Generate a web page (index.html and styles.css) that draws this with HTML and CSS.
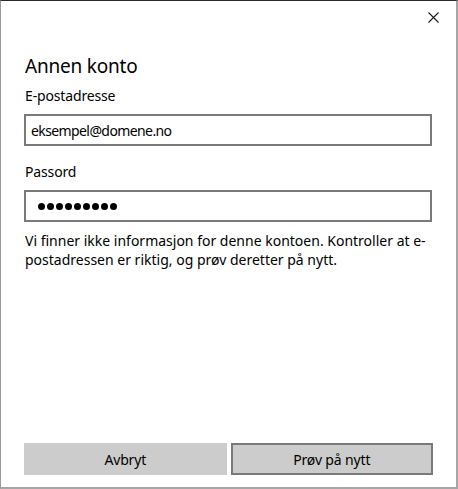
FILE: index.html
```html
<!DOCTYPE html>
<html lang="nb">
<head>
    <meta charset="UTF-8">
    <title>Annen konto</title>
    <link rel="stylesheet" href="styles.css">
</head>
<body>
    <div class="dialog">
        <div class="title-bar">
            <button class="close" aria-label="Lukk">
                <svg width="11" height="11" viewBox="0 0 11 11">
                    <path d="M0.5 0.5 L10.5 10.5 M10.5 0.5 L0.5 10.5" stroke="#1a1a1a" stroke-width="1.1" fill="none"/>
                </svg>
            </button>
        </div>
        <div class="content">
            <h1 class="heading">Annen konto</h1>
            <label class="field-label" for="email">E-postadresse</label>
            <input class="field" id="email" type="text" value="eksempel@domene.no">
            <label class="field-label" for="password">Passord</label>
            <div class="field password">
                <span class="dot"></span><span class="dot"></span><span class="dot"></span>
                <span class="dot"></span><span class="dot"></span><span class="dot"></span>
                <span class="dot"></span><span class="dot"></span><span class="dot"></span>
            </div>
            <p class="message">Vi finner ikke informasjon for denne kontoen. Kontroller at e-postadressen er riktig, og prøv deretter på nytt.</p>
        </div>
        <div class="buttons">
            <button class="btn">Avbryt</button>
            <button class="btn btn-default">Prøv på nytt</button>
        </div>
    </div>
</body>
</html>
```

FILE: styles.css
```css
html, body {
    margin: 0;
    height: 100%;
}
body {
    font-family: "Noto Sans", "Open Sans", sans-serif;
    color: #000;
    background-color: #fff;
}
.dialog {
    box-sizing: border-box;
    height: 489px;
    width: 458px;
    border: 1px solid #999;
    border-top-color: #2b2b2b;
    border-right-width: 2px;
    border-right-color: #a6a6a6;
    border-bottom-width: 2px;
    border-bottom-color: #a6a6a6;
    display: flex;
    flex-direction: column;
}
.title-bar {
    height: 32px;
    display: flex;
    justify-content: flex-end;
}
.close {
    width: 46px;
    height: 32px;
    border: none;
    background: none;
    padding: 0;
    display: flex;
    align-items: center;
    justify-content: center;
}
.content {
    flex: 1;
    padding: 0 23px;
}
.heading {
    margin: 17px 0 0;
    padding-left: 1px;
    font-size: 19px;
    font-weight: normal;
    letter-spacing: -0.2px;
    line-height: 32px;
}
.field-label {
    display: block;
    margin-top: 4px;
    padding-left: 1px;
    font-size: 14px;
    letter-spacing: -0.15px;
    line-height: 20px;
}
.field {
    box-sizing: border-box;
    display: block;
    width: 408px;
    height: 32px;
    margin: 8px 0 0;
    border: 2px solid #7a7a7a;
    padding: 0 5px;
    font-family: inherit;
    font-size: 14px;
    letter-spacing: -0.6px;
    color: #000;
    outline: none;
}
.field + .field-label {
    margin-top: 16px;
}
.password {
    display: flex;
    align-items: center;
    gap: 2px;
    padding-left: 12px;
}
.dot {
    width: 7px;
    height: 7px;
    border-radius: 50%;
    background-color: #000;
}
.message {
    margin: 9px 0 0;
    padding-left: 1px;
    font-size: 14px;
    letter-spacing: 0;
    line-height: 19px;
}
.buttons {
    display: flex;
    gap: 4px;
    padding: 0 23px 12px;
}
.btn {
    box-sizing: border-box;
    flex: 1;
    height: 32px;
    border: 2px solid #ccc;
    background-color: #ccc;
    font-family: inherit;
    font-size: 14px;
    letter-spacing: -0.15px;
    color: #000;
}
.btn-default {
    border-color: #7a7a7a;
}
```
